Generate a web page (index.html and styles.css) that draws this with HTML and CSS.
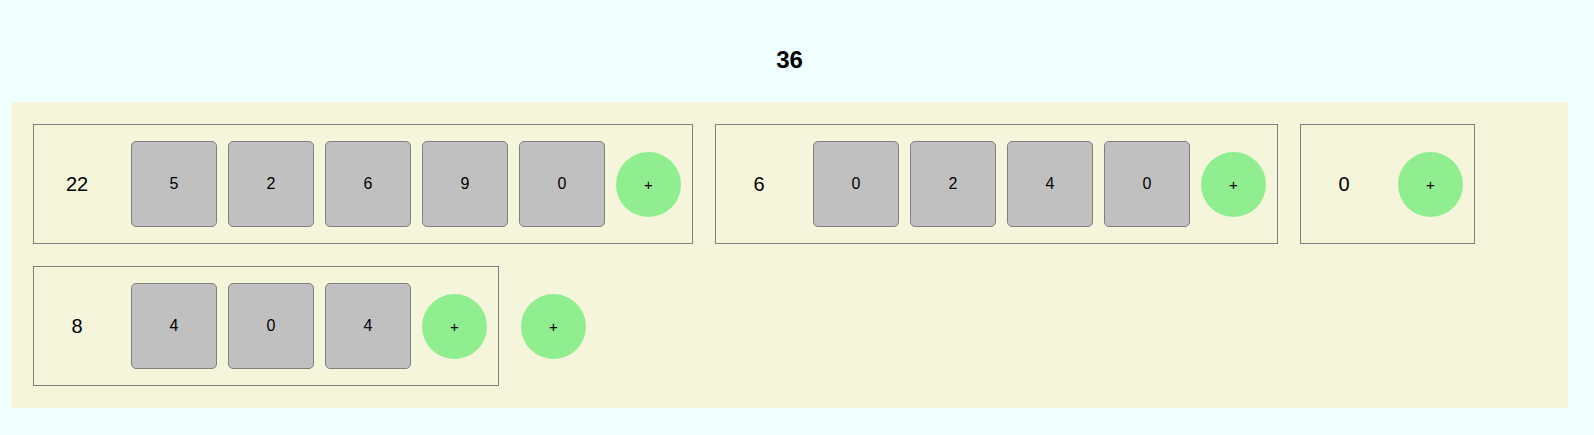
FILE: index.html
```html
<!DOCTYPE html>
<html>
<head>
<meta charset="utf-8">
<link rel="stylesheet" href="styles.css">
</head>
<body>
<div class="page">
  <h2 class="total">36</h2>
  <div class="board">
    <div class="group">
      <div class="label">22</div>
      <div class="tile">5</div>
      <div class="tile">2</div>
      <div class="tile">6</div>
      <div class="tile">9</div>
      <div class="tile">0</div>
      <button class="add">+</button>
    </div>
    <div class="group">
      <div class="label">6</div>
      <div class="tile">0</div>
      <div class="tile">2</div>
      <div class="tile">4</div>
      <div class="tile">0</div>
      <button class="add">+</button>
    </div>
    <div class="group">
      <div class="label">0</div>
      <button class="add">+</button>
    </div>
    <div class="group">
      <div class="label">8</div>
      <div class="tile">4</div>
      <div class="tile">0</div>
      <div class="tile">4</div>
      <button class="add">+</button>
    </div>
    <button class="add add-group">+</button>
  </div>
</div>
</body>
</html>
```
FILE: styles.css
```css
html, body {
  margin: 0;
  padding: 0;
  background: #f0ffff;
  font-family: "Liberation Sans", Arial, sans-serif;
  color: #000;
}

.page {
  width: 1557px;
  margin-left: 11px;
}

.total {
  margin: 46px 0 28px;
  font-size: 24px;
  line-height: 28px;
  font-weight: bold;
  text-align: center;
}

.board {
  background: #f5f5dc;
  padding: 11px;
  display: flex;
  flex-wrap: wrap;
  align-items: stretch;
}

.group {
  margin: 11px;
  border: 1px solid #808080;
  padding: 16px 11px 16px 0;
  display: flex;
  align-items: center;
  gap: 11px;
}

.label {
  width: 86px;
  text-align: center;
  font-size: 20px;
}

.tile {
  box-sizing: border-box;
  width: 86px;
  height: 86px;
  background: #c0c0c0;
  border: 1px solid #808080;
  border-radius: 5px;
  display: flex;
  align-items: center;
  justify-content: center;
  font-size: 16px;
}

.add {
  width: 65px;
  height: 65px;
  border: none;
  border-radius: 50%;
  background: #90ee90;
  padding: 0;
  font-family: "Liberation Sans", Arial, sans-serif;
  font-size: 15px;
  color: #000;
  display: flex;
  align-items: center;
  justify-content: center;
}

.add-group {
  margin: 11px;
  align-self: center;
}
```
